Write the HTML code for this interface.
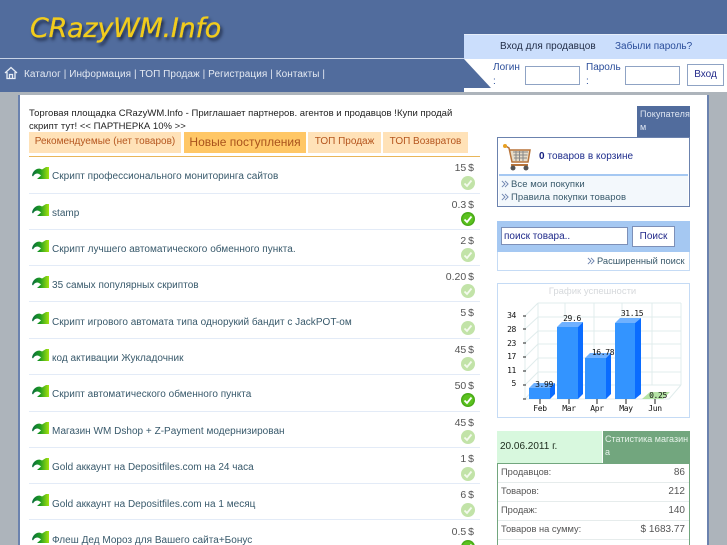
<!DOCTYPE html>
<html><head><meta charset="utf-8">
<style>
html,body{margin:0;padding:0;width:727px;height:545px;overflow:hidden}
body{position:relative;background:#adb4bb;font-family:"Liberation Sans",sans-serif;font-size:10px;color:#222}
#w{position:absolute;left:0;top:0;width:727px;height:545px;overflow:hidden}
.a{position:absolute;white-space:nowrap}
.row{position:absolute;left:29px;width:451px;height:36px;border-bottom:1px solid #e3ebf7;box-sizing:content-box}
.row .t{position:absolute;left:23px;top:14px;font-size:10px;letter-spacing:.02px;color:#38596b;white-space:nowrap;line-height:12px}
.row .p{position:absolute;right:6px;top:5px;font-size:10.500px;word-spacing:-1px;color:#555;line-height:13px}
.row svg{position:absolute}
.tab{position:absolute;top:132px;height:21px;background:#ffe2b8;color:#b5561e;text-align:center;font-size:10px;line-height:20px}
</style></head><body><div id="w">
<div class="a" style="left:0;top:0;width:727px;height:92px;background:#516c9d"></div>
<div class="a" style="left:0;top:58px;width:465px;height:1px;background:#c8d3e6"></div>
<div class="a" style="left:30px;top:10px;font:italic 27px 'DejaVu Sans',sans-serif;letter-spacing:-.25px;color:#f2cc1c;-webkit-text-stroke:.3px #f2cc1c;text-shadow:2px 3px 3px #1c2742;line-height:38px">CRazyWM.Info</div>
<svg class="a" style="left:4px;top:66px" width="14" height="14" viewBox="0 0 14 14"><path d="M1 7 7 1.500 13 7M3 6v6.500h8V6M5.500 12.500V8.500h3v4" fill="none" stroke="#e8edf5" stroke-width="1.300"/></svg>
<div class="a" style="left:24px;top:68px;color:#e4e9f2;font-size:10px;letter-spacing:.07px;line-height:14px">Каталог | Информация | ТОП Продаж | Регистрация | Контакты |</div>

<div class="a" style="left:464px;top:34px;width:263px;height:58px;background:#fff"></div>
<div class="a" style="left:464px;top:34px;width:263px;height:25px;background:#cbdefc;border-top:1px solid #e5edf9;box-sizing:border-box"></div>
<svg class="a" style="left:464px;top:59px" width="64" height="30"><path d="M0 0 27 29H0Z" fill="#516c9d"/></svg>
<div class="a" style="left:500px;top:40px;color:#1f2a44;font-size:10px;letter-spacing:.05px;line-height:14px">Вход для продавцов</div>
<div class="a" style="left:615px;top:40px;color:#2a4d9a;font-size:10px;line-height:14px">Забыли пароль?</div>
<div class="a" style="left:493px;top:61px;color:#2a4d9a;font-size:10px;line-height:14px">Логин<br>:</div>
<div class="a" style="left:586px;top:61px;color:#2a4d9a;font-size:10px;line-height:14px">Пароль<br>:</div>
<div class="a" style="left:525px;top:66px;width:55px;height:19px;box-sizing:border-box;background:#fff;border:1px solid #8fa3c4"></div>
<div class="a" style="left:625px;top:66px;width:55px;height:19px;box-sizing:border-box;background:#fff;border:1px solid #8fa3c4"></div>
<div class="a" style="left:687px;top:64px;width:37px;height:22px;box-sizing:border-box;background:#fff;border:1px solid #8fa3c4;text-align:center;line-height:19px;color:#232a8a;font-size:10px">Вход</div>

<div class="a" style="left:18px;top:95px;width:691px;height:450px;background:#fff;border-left:2px solid #6b82ae;border-right:2px solid #6b82ae;box-sizing:border-box"></div>

<div class="a" style="left:29px;top:107px;width:440px;font-size:9.500px;letter-spacing:.03px;line-height:13px;color:#222;white-space:normal">Торговая площадка CRazyWM.Info - Приглашает партнеров. агентов и продавцов !Купи продай<br>скрипт тут! &lt;&lt; ПАРТНЕРКА 10% &gt;&gt;</div>

<div class="tab" style="left:29px;width:152px">Рекомендуемые (нет товаров)</div>
<div class="tab" style="left:184px;width:122px;background:#ffc766;font-size:12px;color:#a9521c;line-height:21px">Новые поступления</div>
<div class="tab" style="left:308px;width:73px">ТОП Продаж</div>
<div class="tab" style="left:383px;width:85px">ТОП Возвратов</div>
<div class="a" style="left:29px;top:156px;width:451px;height:1px;background:#e8b65a"></div>

<svg width="0" height="0" style="position:absolute"><defs>
<linearGradient id="g" x1="0" x2="1" y1="0" y2="0"><stop offset="0" stop-color="#0b6a3e"/><stop offset=".45" stop-color="#1c9a22"/><stop offset="1" stop-color="#a4e20e"/></linearGradient>
<symbol id="ar" viewBox="0 0 17 12"><path d="M0 8.500C1 3 6 0 10 2.500L14 0H17V12H5L9 8.500C6 5.500 3 6 1 9.500Z" fill="url(#g)"/></symbol>
<symbol id="ch" viewBox="0 0 9 9"><path d="M1 1 4.500 4.500 1 8M4.500 1 8 4.500 4.500 8" fill="none" stroke="#6b82ae"/></symbol>
<symbol id="ok" viewBox="0 0 14 14"><circle cx="7" cy="7" r="7" fill="#49ab18"/><circle cx="7" cy="7" r="5.500" fill="#5cc21f"/><path d="M3.500 7.500 6 10 10.500 4.500" fill="none" stroke="#fff" stroke-width="1.800"/></symbol>
<symbol id="no" viewBox="0 0 14 14"><circle cx="7" cy="7" r="7" fill="#c2e3a8"/><path d="M3.500 7.500 6 10 10.500 4.500" fill="none" stroke="#f4faee" stroke-width="1.800"/></symbol>
</defs></svg>

<div class="row" style="top:157px"><svg style="left:3px;top:10px" width="17" height="12"><use href="#ar"/></svg><span class="t">Скрипт профессионального мониторинга сайтов</span><span class="p">15 $</span><svg style="left:432px;top:19px" width="14" height="14"><use href="#no"/></svg></div>
<div class="row" style="top:194px;height:35px"><svg style="left:3px;top:10px" width="17" height="12"><use href="#ar"/></svg><span class="t">stamp</span><span class="p">0.3 $</span><svg style="left:432px;top:18px" width="14" height="14"><use href="#ok"/></svg></div>
<div class="row" style="top:230px;height:35px"><svg style="left:3px;top:10px" width="17" height="12"><use href="#ar"/></svg><span class="t">Скрипт лучшего автоматического обменного пункта.</span><span class="p">2 $</span><svg style="left:432px;top:18px" width="14" height="14"><use href="#no"/></svg></div>
<div class="row" style="top:266px;height:35px"><svg style="left:3px;top:10px" width="17" height="12"><use href="#ar"/></svg><span class="t">35 самых популярных скриптов</span><span class="p">0.20 $</span><svg style="left:432px;top:18px" width="14" height="14"><use href="#no"/></svg></div>
<div class="row" style="top:302px;height:36px"><svg style="left:3px;top:10px" width="17" height="12"><use href="#ar"/></svg><span class="t" style="top:15px">Скрипт игрового автомата типа однорукий бандит с JackPOT-ом</span><span class="p">5 $</span><svg style="left:432px;top:19px" width="14" height="14"><use href="#no"/></svg></div>
<div class="row" style="top:339px;height:35px"><svg style="left:3px;top:10px" width="17" height="12"><use href="#ar"/></svg><span class="t">код активации Жукладочник</span><span class="p">45 $</span><svg style="left:432px;top:18px" width="14" height="14"><use href="#no"/></svg></div>
<div class="row" style="top:375px;height:36px"><svg style="left:3px;top:10px" width="17" height="12"><use href="#ar"/></svg><span class="t">Скрипт автоматического обменного пункта</span><span class="p">50 $</span><svg style="left:432px;top:18px" width="14" height="14"><use href="#ok"/></svg></div>
<div class="row" style="top:412px;height:35px"><svg style="left:3px;top:10px" width="17" height="12"><use href="#ar"/></svg><span class="t">Магазин WM Dshop + Z-Payment модернизирован</span><span class="p">45 $</span><svg style="left:432px;top:18px" width="14" height="14"><use href="#no"/></svg></div>
<div class="row" style="top:448px;height:35px"><svg style="left:3px;top:10px" width="17" height="12"><use href="#ar"/></svg><span class="t">Gold аккаунт на Depositfiles.com на 24 часа</span><span class="p">1 $</span><svg style="left:432px;top:19px" width="14" height="14"><use href="#no"/></svg></div>
<div class="row" style="top:484px;height:35px"><svg style="left:3px;top:10px" width="17" height="12"><use href="#ar"/></svg><span class="t" style="top:15px">Gold аккаунт на Depositfiles.com на 1 месяц</span><span class="p">6 $</span><svg style="left:432px;top:19px" width="14" height="14"><use href="#no"/></svg></div>
<div class="row" style="top:521px;height:24px;border:0"><svg style="left:3px;top:10px" width="17" height="12"><use href="#ar"/></svg><span class="t">Флеш Дед Мороз для Вашего сайта+Бонус</span><span class="p">0.5 $</span><svg style="left:432px;top:19px" width="14" height="14"><use href="#ok"/></svg></div>

<!-- cart -->
<div class="a" style="left:637px;top:106px;width:53px;height:32px;background:#516c9d;color:#dfe6f2;font-size:9px;letter-spacing:.15px;line-height:13px;padding:2px 0 0 3px;box-sizing:border-box">Покупателя<br>м</div>
<div class="a" style="left:497px;top:137px;width:193px;height:70px;box-sizing:border-box;border:1px solid #6b82ae;background:#fff"></div>
<div class="a" style="left:499px;top:174px;width:189px;height:2px;background:#a5c8f2"></div>
<div class="a" style="left:499px;top:176px;width:189px;height:30px;background:#f3f8fc"></div>
<svg class="a" style="left:502px;top:143px" width="30" height="29" viewBox="0 0 30 29"><path d="M2 2 7 5 10 19H26L28 7H8" fill="#e8dcc8" stroke="#b8743a" stroke-width="1.500"/><path d="M11 9h15M11.500 12h14M12 15h13M14 8v10M17.500 8v10M21 8v10" stroke="#888" fill="none"/><path d="M9 22H26" stroke="#b8743a" stroke-width="2"/><circle cx="11" cy="25" r="2.500" fill="#555"/><circle cx="24" cy="25" r="2.500" fill="#555"/><circle cx="3" cy="3" r="2" fill="#e8a020"/></svg>
<div class="a" style="left:539px;top:150px;font-size:10px;letter-spacing:.05px;line-height:14px;color:#1d2c8c"><b style="color:#151f80">0</b> товаров в корзине</div>
<svg class="a" style="left:501px;top:180px" width="8" height="8"><use href="#ch"/></svg>
<div class="a" style="left:511px;top:178px;font-size:9.500px;letter-spacing:.06px;line-height:13px;color:#38596b">Все мои покупки</div>
<svg class="a" style="left:501px;top:193px" width="8" height="8"><use href="#ch"/></svg>
<div class="a" style="left:511px;top:191px;font-size:9.500px;letter-spacing:.08px;line-height:13px;color:#38596b">Правила покупки товаров</div>

<!-- search -->
<div class="a" style="left:497px;top:221px;width:193px;height:50px;box-sizing:border-box;border:1px solid #c5dbf5;background:#fff"></div>
<div class="a" style="left:497px;top:221px;width:193px;height:31px;background:#a5c8f2"></div>
<div class="a" style="left:501px;top:227px;width:127px;height:18px;box-sizing:border-box;background:#fff;border:1px solid #7d90b8;color:#1f2a8a;font-size:10px;line-height:17px;padding-left:2px">поиск товара..</div>
<div class="a" style="left:632px;top:226px;width:43px;height:21px;box-sizing:border-box;background:#fff;border:1px solid #7d90b8;color:#232a8a;font-size:10px;text-align:center;line-height:19px">Поиск</div>
<svg class="a" style="left:587px;top:257px" width="8" height="8"><use href="#ch"/></svg>
<div class="a" style="left:597px;top:255px;font-size:9.300px;line-height:13px;color:#38596b">Расширенный поиск</div>

<!-- chart -->
<div class="a" style="left:497px;top:283px;width:193px;height:135px;box-sizing:border-box;border:1px solid #c5dbf5;background:#fff"></div>
<div class="a" style="left:496px;top:285px;width:193px;text-align:center;font-size:9.500px;line-height:13px;color:#d6d9dc">График успешности</div>
<svg class="a" style="left:497px;top:283px" width="193" height="135" viewBox="0 0 193 135" font-family="'DejaVu Sans Mono','Liberation Mono',monospace" font-size="8" letter-spacing="-.35" fill="#111">
<g stroke="#e0ecec" fill="none"><path d="M41 20H184M41 34H184M41 48H184M41 61H184M41 75H184M41 89H184M41 102H184M41 20V102M68 20V102M97 20V102M125 20V102M155 20V102M184 20V102M28 33 41 20M28 46 41 34M28 60 41 48M28 74 41 61M28 88 41 75M28 102 41 89M28 116 41 102M28 116H172L184 102M28 33V116"/></g>
<path d="M32 116V105H53V116Z" fill="#3394ff"/><path d="M32 105 37 100H58L53 105Z" fill="#6fb1ff"/><path d="M53 105 58 100V111L53 116Z" fill="#0a6cff"/>
<path d="M60 116V44H81V116Z" fill="#3394ff"/><path d="M60 44 65 39H86L81 44Z" fill="#6fb1ff"/><path d="M81 44 86 39V111L81 116Z" fill="#0a6cff"/>
<path d="M88 116V75H109V116Z" fill="#3394ff"/><path d="M88 75 93 70H114L109 75Z" fill="#6fb1ff"/><path d="M109 75 114 70V111L109 116Z" fill="#0a6cff"/>
<path d="M118 116V40H138V116Z" fill="#3394ff"/><path d="M118 40 123 35H144L138 40Z" fill="#6fb1ff"/><path d="M138 40 144 35V111L138 116Z" fill="#0a6cff"/>
<path d="M145 116 153 109H173L166 116Z" fill="#b4e3a5"/>
<g text-anchor="middle"><text x="47" y="104">3.99</text><text x="75" y="38">29.6</text><text x="106" y="72">16.78</text><text x="135" y="33">31.15</text><text x="161" y="115">0.25</text></g>
<g text-anchor="end"><text x="19" y="35">34</text><text x="19" y="49">28</text><text x="19" y="63">23</text><text x="19" y="76">17</text><text x="19" y="90">11</text><text x="19" y="103">5</text></g>
<path d="M26 33h3M26 46h3M26 60h3M26 74h3M26 88h3M26 102h3M26 116h3M43 116v5M72 116v5M100 116v5M129 116v5M158 116v5" stroke="#222" fill="none"/>
<g text-anchor="middle"><text x="43" y="128">Feb</text><text x="72" y="128">Mar</text><text x="100" y="128">Apr</text><text x="129" y="128">May</text><text x="158" y="128">Jun</text></g>
</svg>

<!-- stats -->
<div class="a" style="left:497px;top:431px;width:105px;height:32px;background:#d8f8de;color:#1c2a1c;font-size:10px;line-height:32px;padding-left:3px;box-sizing:border-box">20.06.2011 г.</div>
<div class="a" style="left:603px;top:431px;width:87px;height:32px;background:#72a67e;color:#e5f2e8;font-size:9px;line-height:13px;padding:2px 0 0 2px;box-sizing:border-box">Статистика магазин<br>а</div>
<div class="a" style="left:497px;top:463px;width:193px;height:82px;box-sizing:border-box;border:1px solid #72a67e;border-bottom:0;background:#fff"></div>
<div class="a" style="left:501px;top:466px;font-size:9.300px;line-height:13px;color:#555">Продавцов:</div><div class="a" style="right:42px;top:466px;font-size:10px;line-height:13px;color:#555">86</div>
<div class="a" style="left:498px;top:482px;width:191px;height:1px;background:#e6ecec"></div>
<div class="a" style="left:501px;top:485px;font-size:9.300px;line-height:13px;color:#555">Товаров:</div><div class="a" style="right:42px;top:485px;font-size:10px;line-height:13px;color:#555">212</div>
<div class="a" style="left:498px;top:501px;width:191px;height:1px;background:#e6ecec"></div>
<div class="a" style="left:501px;top:504px;font-size:9.300px;line-height:13px;color:#555">Продаж:</div><div class="a" style="right:42px;top:504px;font-size:10px;line-height:13px;color:#555">140</div>
<div class="a" style="left:498px;top:520px;width:191px;height:1px;background:#e6ecec"></div>
<div class="a" style="left:501px;top:523px;font-size:9.300px;line-height:13px;color:#555">Товаров на сумму:</div><div class="a" style="right:42px;top:523px;font-size:10px;line-height:13px;color:#555">$ 1683.77</div>
<div class="a" style="left:498px;top:539px;width:191px;height:1px;background:#e6ecec"></div>
</div></body></html>
